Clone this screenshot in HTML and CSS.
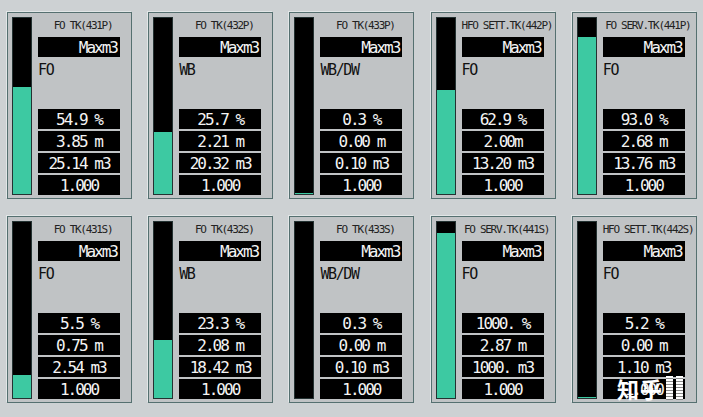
FILE: index.html
```html
<!DOCTYPE html>
<html lang="zh">

<head>
    <meta charset="UTF-8">
    <meta name="viewport" content="width=device-width, initial-scale=1.0">
    <title>Tank gauges</title>
    <link rel="stylesheet" href="styles.css">
</head>

<body>
    <div class="tank-grid">
        <div class="tank">
            <div class="bar"><div class="fill" style="height: 61%"></div></div>
            <div class="info">
                <div class="title">FO TK(431P)</div>
                <div class="max">Maxm3</div>
                <div class="kind">FO</div>
                <div class="values">
                    <div class="val">54.9 %</div>
                    <div class="val">3.85 m</div>
                    <div class="val">25.14 m3</div>
                    <div class="val">1.000</div>
                </div>
            </div>
        </div>

        <div class="tank">
            <div class="bar"><div class="fill" style="height: 35%"></div></div>
            <div class="info">
                <div class="title">FO TK(432P)</div>
                <div class="max">Maxm3</div>
                <div class="kind">WB</div>
                <div class="values">
                    <div class="val">25.7 %</div>
                    <div class="val">2.21 m</div>
                    <div class="val">20.32 m3</div>
                    <div class="val">1.000</div>
                </div>
            </div>
        </div>

        <div class="tank">
            <div class="bar"><div class="fill" style="height: 0.8%"></div></div>
            <div class="info">
                <div class="title">FO TK(433P)</div>
                <div class="max">Maxm3</div>
                <div class="kind">WB/DW</div>
                <div class="values">
                    <div class="val">0.3 %</div>
                    <div class="val">0.00 m</div>
                    <div class="val">0.10 m3</div>
                    <div class="val">1.000</div>
                </div>
            </div>
        </div>

        <div class="tank">
            <div class="bar"><div class="fill" style="height: 59%"></div></div>
            <div class="info">
                <div class="title">HFO SETT.TK(442P)</div>
                <div class="max">Maxm3</div>
                <div class="kind">FO</div>
                <div class="values">
                    <div class="val">62.9 %</div>
                    <div class="val">2.00m</div>
                    <div class="val">13.20 m3</div>
                    <div class="val">1.000</div>
                </div>
            </div>
        </div>

        <div class="tank">
            <div class="bar"><div class="fill" style="height: 89%"></div></div>
            <div class="info">
                <div class="title">FO SERV.TK(441P)</div>
                <div class="max">Maxm3</div>
                <div class="kind">FO</div>
                <div class="values">
                    <div class="val">93.0 %</div>
                    <div class="val">2.68 m</div>
                    <div class="val">13.76 m3</div>
                    <div class="val">1.000</div>
                </div>
            </div>
        </div>

        <div class="tank">
            <div class="bar"><div class="fill" style="height: 13%"></div></div>
            <div class="info">
                <div class="title">FO TK(431S)</div>
                <div class="max">Maxm3</div>
                <div class="kind">FO</div>
                <div class="values">
                    <div class="val">5.5 %</div>
                    <div class="val">0.75 m</div>
                    <div class="val">2.54 m3</div>
                    <div class="val">1.000</div>
                </div>
            </div>
        </div>

        <div class="tank">
            <div class="bar"><div class="fill" style="height: 33%"></div></div>
            <div class="info">
                <div class="title">FO TK(432S)</div>
                <div class="max">Maxm3</div>
                <div class="kind">WB</div>
                <div class="values">
                    <div class="val">23.3 %</div>
                    <div class="val">2.08 m</div>
                    <div class="val">18.42 m3</div>
                    <div class="val">1.000</div>
                </div>
            </div>
        </div>

        <div class="tank">
            <div class="bar"><div class="fill" style="height: 0%"></div></div>
            <div class="info">
                <div class="title">FO TK(433S)</div>
                <div class="max">Maxm3</div>
                <div class="kind">WB/DW</div>
                <div class="values">
                    <div class="val">0.3 %</div>
                    <div class="val">0.00 m</div>
                    <div class="val">0.10 m3</div>
                    <div class="val">1.000</div>
                </div>
            </div>
        </div>

        <div class="tank">
            <div class="bar"><div class="fill" style="height: 94%"></div></div>
            <div class="info">
                <div class="title">FO SERV.TK(441S)</div>
                <div class="max">Maxm3</div>
                <div class="kind">FO</div>
                <div class="values">
                    <div class="val">1000. %</div>
                    <div class="val">2.87 m</div>
                    <div class="val">1000. m3</div>
                    <div class="val">1.000</div>
                </div>
            </div>
        </div>

        <div class="tank">
            <div class="bar"><div class="fill" style="height: 0.6%"></div></div>
            <div class="info">
                <div class="title">HFO SETT.TK(442S)</div>
                <div class="max">Maxm3</div>
                <div class="kind">FO</div>
                <div class="values">
                    <div class="val">5.2 %</div>
                    <div class="val">0.00 m</div>
                    <div class="val">1.10 m3</div>
                    <div class="val">1.000</div>
                </div>
            </div>
        </div>
    </div>

    <!-- site mark in the corner -->
    <div class="mark">
        <span class="mark-name">知乎</span>
        <span class="mark-tag"></span>
        <span class="mark-tag"></span>
    </div>
</body>

</html>
```

FILE: styles.css
```css
body {
    margin: 0;
    padding: 12px 0 0 7px;
    height: 417px;
    box-sizing: border-box;
    position: relative;
    overflow: hidden;
    background: #cdd1d3;
    font-family: 'DejaVu Sans Mono', 'Liberation Mono', monospace;
    color: #111;
}

.tank-grid {
    display: grid;
    grid-template-columns: repeat(5, 125px);
    grid-auto-rows: 187px;
    column-gap: 16.2px;
    row-gap: 17px;
}

.tank {
    display: flex;
    gap: 6px;
    padding: 4px 11px 3px 4px;
    background: #c0c3c5;
    border: 1px solid #557070;
    box-shadow: -1px -1px 0 #e2e6e7;
}

.bar {
    width: 18px;
    flex-shrink: 0;
    display: flex;
    flex-direction: column;
    justify-content: flex-end;
    background: #000;
    border: 1px solid #243232;
}

.fill {
    background: #3dc9a2;
}

.info {
    flex: 1;
    display: flex;
    flex-direction: column;
    min-width: 0;
}

.title {
    height: 20px;
    line-height: 18px;
    font-size: 11px;
    letter-spacing: -1.3px;
    text-align: center;
    white-space: nowrap;
    margin-right: -8px;
    color: #222;
}

.max {
    height: 20px;
    line-height: 21px;
    background: #000;
    color: #f4f4f4;
    font-size: 16px;
    letter-spacing: -2px;
    text-align: right;
    padding-right: 3px;
}

.kind {
    margin-top: 4px;
    font-size: 15px;
    letter-spacing: -1.4px;
    line-height: 18px;
}

.values {
    margin-top: auto;
    display: flex;
    flex-direction: column;
    gap: 2px;
}

.val {
    height: 20px;
    line-height: 21px;
    background: #000;
    color: #f4f4f4;
    font-size: 16px;
    letter-spacing: -2px;
    text-align: center;
    white-space: pre;
}

.mark {
    position: absolute;
    left: 617px;
    top: 372px;
    display: flex;
    align-items: center;
    gap: 3px;
}

.mark-name {
    font-family: 'Noto Sans CJK SC', sans-serif;
    font-size: 22px;
    font-weight: 700;
    color: #fff;
    letter-spacing: 1px;
}

.mark-tag {
    width: 7px;
    height: 24px;
    background: repeating-linear-gradient(to bottom, #fff 0 2px, #8a8a8a 2px 3px);
}
```
